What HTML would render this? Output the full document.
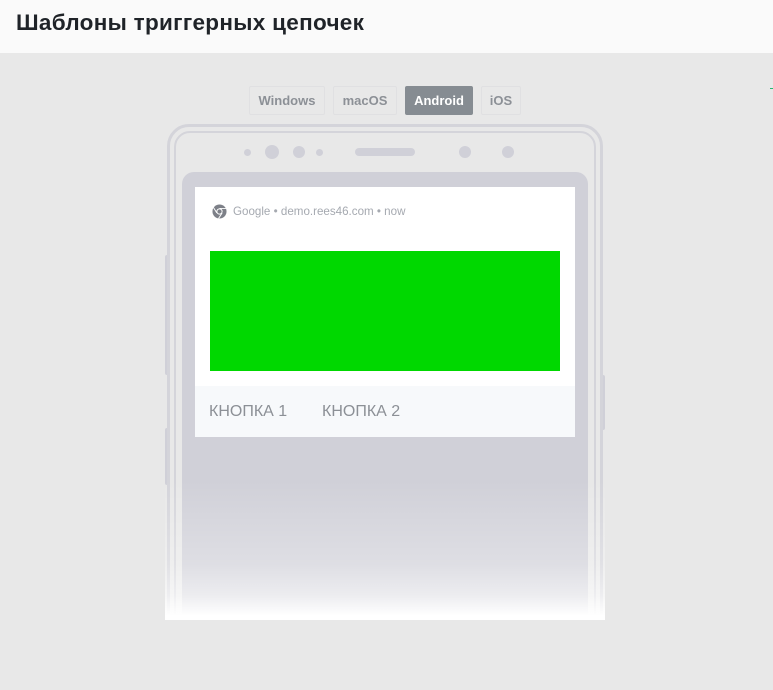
<!DOCTYPE html>
<html><head><meta charset="utf-8"><style>
*{margin:0;padding:0;box-sizing:border-box}
body{width:773px;height:690px;background:#e8e8e8;font-family:"Liberation Sans",sans-serif;position:relative;overflow:hidden}
.hdr{position:absolute;left:0;top:0;width:773px;height:53px;background:#fafafa}
.hdr h1{position:absolute;left:16px;top:10px;font-size:22.5px;font-weight:bold;color:#1f2328;letter-spacing:0.3px}
.tab{position:absolute;top:86px;height:29px;border:1px solid #e0e0e2;border-radius:2px;font-size:13px;font-weight:bold;color:#8c9096;text-align:center;line-height:27px}
.tab.a{background:#868c92;color:#fff;border-color:#868c92}
.abs{position:absolute}
.dot{position:absolute;background:#d0d0d8;border-radius:50%}
</style></head><body>
<div class="hdr"><h1>Шаблоны триггерных цепочек</h1></div>
<div class="tab" style="left:249px;width:76px">Windows</div>
<div class="tab" style="left:333px;width:64px">macOS</div>
<div class="tab a" style="left:405px;width:68px">Android</div>
<div class="tab" style="left:481px;width:40px">iOS</div>

<div class="abs" style="left:165px;top:255px;width:4px;height:120px;background:#d0d0d8;border-radius:2px"></div>
<div class="abs" style="left:165px;top:428px;width:4px;height:57px;background:#d0d0d8;border-radius:2px"></div>
<div class="abs" style="left:601px;top:375px;width:4px;height:55px;background:#d0d0d8;border-radius:2px"></div>
<div class="abs" style="left:167px;top:124px;width:436px;height:520px;border:3px solid #d4d4da;border-radius:22px"></div>
<div class="abs" style="left:174px;top:131px;width:422px;height:510px;border:2px solid #d4d4da;border-radius:16px"></div>

<div class="dot" style="left:244px;top:149px;width:7px;height:7px"></div>
<div class="dot" style="left:265px;top:145px;width:14px;height:14px"></div>
<div class="dot" style="left:293px;top:146px;width:12px;height:12px"></div>
<div class="dot" style="left:316px;top:149px;width:7px;height:7px"></div>
<div class="abs" style="left:355px;top:148px;width:60px;height:8px;background:#d0d0d8;border-radius:4px"></div>
<div class="dot" style="left:459px;top:146px;width:12px;height:12px"></div>
<div class="dot" style="left:502px;top:146px;width:12px;height:12px"></div>

<div class="abs" style="left:182px;top:172px;width:406px;height:470px;background:#d0d0d8;border-radius:12px 12px 0 0"></div>
<div class="abs" style="left:195px;top:187px;width:380px;height:250px;background:#fff"></div>
<svg class="abs" style="left:212px;top:204px" width="15" height="15" viewBox="0 0 16 16"><circle cx="8" cy="8" r="7.5" fill="#7d8088"/><circle cx="8" cy="8" r="3.3" fill="#fff"/><circle cx="8" cy="8" r="2.3" fill="#7d8088"/><path d="M8 4.7H15M5.2 9.6L1.6 3.8M10.8 9.6L7 15.4" stroke="#fff" stroke-width="1"/></svg>
<div class="abs" style="left:233px;top:205px;font-size:11.6px;color:#a5a9b0">Google • demo.rees46.com • now</div>
<div class="abs" style="left:210px;top:251px;width:350px;height:120px;background:#00d800"></div>
<div class="abs" style="left:195px;top:386px;width:380px;height:51px;background:#f7f9fb"></div>
<div class="abs" style="left:209px;top:403px;font-size:16px;color:#8c9096">КНОПКА 1</div>
<div class="abs" style="left:322px;top:403px;font-size:16px;color:#8c9096">КНОПКА 2</div>

<div class="abs" style="left:165px;top:480px;width:440px;height:140px;background:linear-gradient(to bottom,rgba(255,255,255,0) 0%,rgba(255,255,255,0.3) 60%,rgba(255,255,255,0.6) 82%,#fff 97%)"></div>
<div class="abs" style="left:164px;top:620px;width:445px;height:70px;background:#e8e8e8"></div>
<div class="abs" style="left:770px;top:88px;width:3px;height:1px;background:#2bb673"></div>
</body></html>
